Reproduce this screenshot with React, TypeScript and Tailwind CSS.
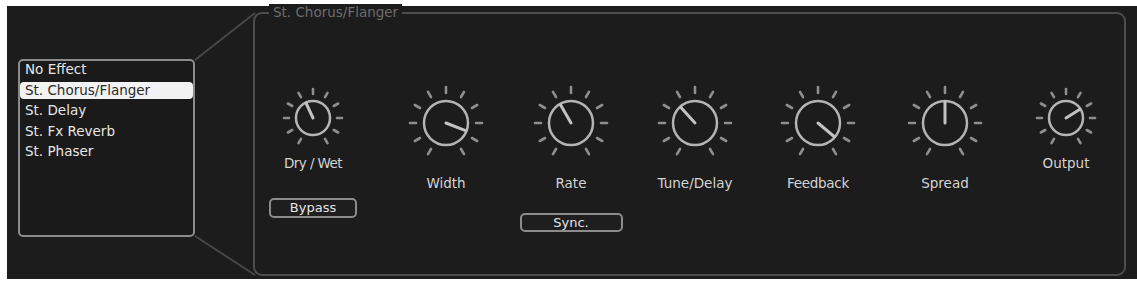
const effects = ["No Effect", "St. Chorus/Flanger", "St. Delay", "St. Fx Reverb", "St. Phaser"];

type KnobDef = {
  label: string;
  angle: number;
  small?: boolean;
  ml: string;
  labelCls: string;
  button?: { text: string; cls: string };
};

const knobs: KnobDef[] = [
  { label: "Dry / Wet", angle: -25, small: true, ml: "ml-[3px]", labelCls: "mt-[2px] tracking-[-0.6px]", button: { text: "Bypass", cls: "mt-[27px] w-[88px] h-[20px]" } },
  { label: "Width", angle: 111, ml: "ml-[23px]", labelCls: "mt-[12px]" },
  { label: "Rate", angle: -30, ml: "ml-[15px]", labelCls: "mt-[12px]", button: { text: "Sync.", cls: "mt-[22px] w-[103px] h-[19px]" } },
  { label: "Tune/Delay", angle: -42, ml: "ml-[14px]", labelCls: "mt-[12px]" },
  { label: "Feedback", angle: 130, ml: "ml-[13px]", labelCls: "mt-[12px] tracking-[-0.3px]" },
  { label: "Spread", angle: 0, ml: "ml-[17px]", labelCls: "mt-[12px]" },
  { label: "Output", angle: 58, small: true, ml: "ml-[11px]", labelCls: "mt-[2px]" },
];

function Knob({ angle, small }: { angle: number; small?: boolean }) {
  const size = small ? 70 : 80;
  const c = size / 2;
  const r = small ? 17 : 22;
  const t0 = small ? 24 : 30;
  const t1 = small ? 29 : 36;
  const ticks = [-150, -120, -90, -60, -30, 0, 30, 60, 90, 120, 150];
  const rad = (a: number) => ((a - 90) * Math.PI) / 180;
  return (
    <svg width={size} height={size} viewBox={`0 0 ${size} ${size}`}>
      {ticks.map((a) => (
        <line
          key={a}
          x1={c + t0 * Math.cos(rad(a))}
          y1={c + t0 * Math.sin(rad(a))}
          x2={c + t1 * Math.cos(rad(a))}
          y2={c + t1 * Math.sin(rad(a))}
          stroke="#8e8e8e"
          strokeWidth={2.6}
          strokeLinecap="round"
        />
      ))}
      <circle cx={c} cy={c} r={r} fill="none" stroke="#b4b4b4" strokeWidth={2.5} />
      <line
        x1={c}
        y1={c}
        x2={c + (r - 1) * Math.cos(rad(angle))}
        y2={c + (r - 1) * Math.sin(rad(angle))}
        stroke="#c2c2c2"
        strokeWidth={3}
        strokeLinecap="round"
      />
    </svg>
  );
}

export default function App() {
  return (
    <div className="w-[1137px] h-[281px] bg-white pt-[6px] pl-[7px] pb-[2px] flex font-['DejaVu_Sans',sans-serif] text-[13.5px]">
      <div className="relative flex-1 bg-[#1c1c1c] flex items-start pl-[11px]">
        <svg className="absolute left-0 top-0 pointer-events-none" width="260" height="273">
          <line x1="188" y1="54" x2="248" y2="7" stroke="#474747" strokeWidth="2" />
          <line x1="188" y1="230" x2="248" y2="269" stroke="#474747" strokeWidth="2" />
        </svg>

        <div className="relative mt-[53px] w-[177px] h-[178px] border-2 border-[#8c8c8c] rounded-[5px] bg-[#1a1a1a] flex flex-col gap-[3.5px]">
          {effects.map((e) => (
            <div
              key={e}
              className={
                e === "St. Chorus/Flanger"
                  ? "h-[17px] leading-[17px] pl-[5px] bg-[#f2f2f2] text-[#2a2a2a] rounded-[4px]"
                  : "h-[17px] leading-[17px] pl-[5px] text-[#e6e6e6]"
              }
            >
              {e}
            </div>
          ))}
        </div>

        <div className="relative ml-[58px] mt-[6px] w-[873px] h-[264px] border-2 border-[#4d4d4d] rounded-[9px] bg-[#1c1c1c]">
          <span className="absolute left-[14px] top-[-10px] px-[4px] leading-[16px] bg-[#1c1c1c] text-[#6c6c6c]">
            St. Chorus/Flanger
          </span>
          <div className="flex items-start pt-[69px]">
            {knobs.map((k) => (
              <div key={k.label} className={`${k.ml} w-[110px] flex flex-col items-center`}>
                <Knob angle={k.angle} small={k.small} />
                <div className={`${k.labelCls} leading-[16px] text-[#d4d4d4]`}>{k.label}</div>
                {k.button && (
                  <div
                    className={`${k.button.cls} border-2 border-[#8c8c8c] rounded-[5px] bg-[#1e1e1e] text-[#e4e4e4] text-[13px] flex items-center justify-center`}
                  >
                    {k.button.text}
                  </div>
                )}
              </div>
            ))}
          </div>
        </div>
      </div>
    </div>
  );
}
